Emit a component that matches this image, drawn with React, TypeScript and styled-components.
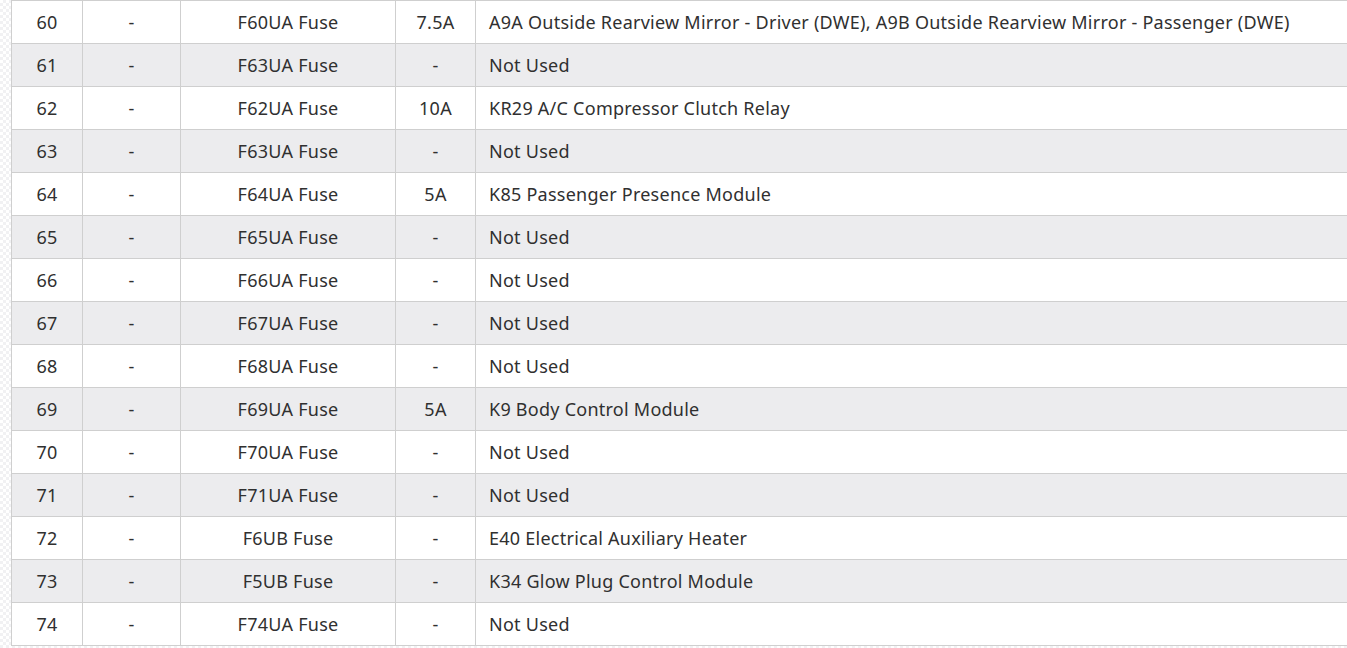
import React from 'react';
import styled, { createGlobalStyle } from 'styled-components';

const GlobalStyle = createGlobalStyle`
  html, body {
    margin: 0;
    padding: 0;
    overflow: hidden;
  }
  body {
    background-color: #ffffff;
    background-image:
      linear-gradient(45deg, #f1f1f3 25%, transparent 25%, transparent 75%, #f1f1f3 75%),
      linear-gradient(45deg, #f1f1f3 25%, transparent 25%, transparent 75%, #f1f1f3 75%);
    background-size: 6px 6px;
    background-position: 0 0, 3px 3px;
    font-family: "Noto Sans", "Open Sans", "Liberation Sans", sans-serif;
  }
`;

const Page = styled.div`
  padding-left: 11px;
  width: 1360px;
`;

const Table = styled.table`
  border-collapse: collapse;
  width: 100%;
  background: #fff;
  color: #303030;
  font-size: 18px;
  letter-spacing: 0.25px;

  td {
    border: 1px solid #cfcfcf;
    height: 42px;
    padding: 0 13px;
    box-sizing: border-box;
    line-height: 42px;
    white-space: nowrap;
  }
`;

const Row = styled.tr<{ $striped: boolean }>`
  background: ${p => (p.$striped ? '#ececee' : '#ffffff')};
`;

const Cell = styled.td<{ $w?: number; $align?: string }>`
  width: ${p => (p.$w ? `${p.$w}px` : 'auto')};
  text-align: ${p => p.$align || 'center'};
`;

const rows: [string, string, string, string][] = [
  ['60', 'F60UA Fuse', '7.5A', 'A9A Outside Rearview Mirror - Driver (DWE), A9B Outside Rearview Mirror - Passenger (DWE)'],
  ['61', 'F63UA Fuse', '-', 'Not Used'],
  ['62', 'F62UA Fuse', '10A', 'KR29 A/C Compressor Clutch Relay'],
  ['63', 'F63UA Fuse', '-', 'Not Used'],
  ['64', 'F64UA Fuse', '5A', 'K85 Passenger Presence Module'],
  ['65', 'F65UA Fuse', '-', 'Not Used'],
  ['66', 'F66UA Fuse', '-', 'Not Used'],
  ['67', 'F67UA Fuse', '-', 'Not Used'],
  ['68', 'F68UA Fuse', '-', 'Not Used'],
  ['69', 'F69UA Fuse', '5A', 'K9 Body Control Module'],
  ['70', 'F70UA Fuse', '-', 'Not Used'],
  ['71', 'F71UA Fuse', '-', 'Not Used'],
  ['72', 'F6UB Fuse', '-', 'E40 Electrical Auxiliary Heater'],
  ['73', 'F5UB Fuse', '-', 'K34 Glow Plug Control Module'],
  ['74', 'F74UA Fuse', '-', 'Not Used'],
];

export default function App() {
  return (
    <>
      <GlobalStyle />
      <Page>
        <Table>
          <tbody>
            {rows.map((r, i) => (
              <Row key={r[0]} $striped={i % 2 === 1}>
                <Cell $w={71}>{r[0]}</Cell>
                <Cell $w={98}>-</Cell>
                <Cell $w={215}>{r[1]}</Cell>
                <Cell $w={80}>{r[2]}</Cell>
                <Cell $align="left">{r[3]}</Cell>
              </Row>
            ))}
          </tbody>
        </Table>
      </Page>
    </>
  );
}
